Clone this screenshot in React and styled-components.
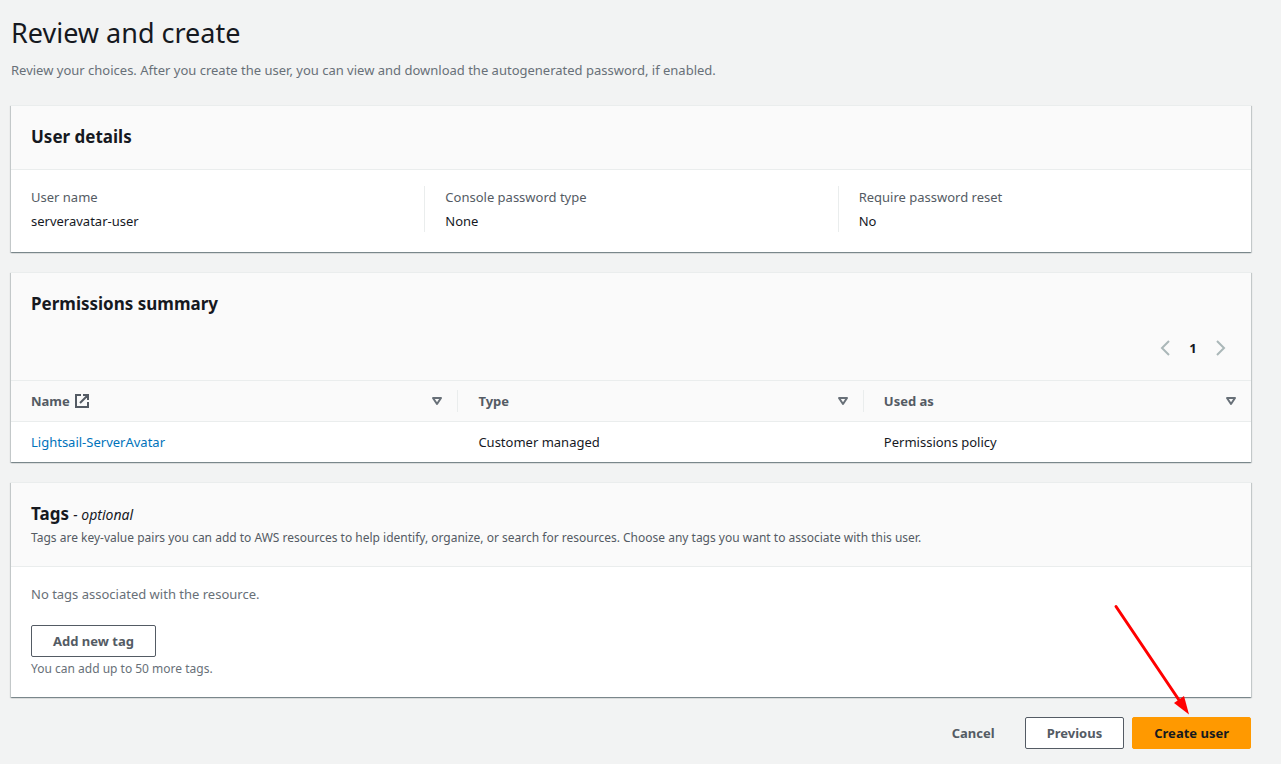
import React from 'react';
import styled, { createGlobalStyle } from 'styled-components';

const GlobalStyle = createGlobalStyle`
  * {
    box-sizing: border-box;
  }

  body {
    margin: 0;
    background: #f2f3f3;
    color: #16191f;
    font-family: "Noto Sans", "Open Sans", sans-serif;
    font-size: 13px;
    line-height: 22px;
  }
`;

const Page = styled.main`
  padding: 15px 30px 15px 11px;
`;

const PageHeader = styled.header`
  margin-bottom: 24px;

  h1 {
    margin: 0 0 8px;
    font-size: 27px;
    font-weight: 400;
    line-height: 36px;
  }

  p {
    margin: 0;
    color: #687078;
  }
`;

const Panel = styled.section`
  margin-bottom: 20px;
  background: #fff;
  border-top: 1px solid #eaeded;
  box-shadow: 0 1px 1px 0 rgba(0, 28, 36, 0.3),
    1px 1px 1px 0 rgba(0, 28, 36, 0.15),
    -1px 1px 1px 0 rgba(0, 28, 36, 0.15);
`;

const PanelHeader = styled.div`
  padding: 19px 20px 20px;
  background: #fafafa;
  border-bottom: 1px solid #eaeded;

  h2 {
    margin: 0;
    font-size: 17px;
    font-weight: 700;
    line-height: 24px;
  }

  p {
    margin: 3px 0 0;
    color: #545b64;
    font-size: 12px;
    line-height: 16px;
  }
`;

const Optional = styled.i`
  font-size: 14px;
  font-weight: 400;
`;

const Details = styled.dl`
  display: grid;
  grid-template-columns: repeat(3, 1fr);
  margin: 0;
  padding: 16px 0 20px;
`;

const Detail = styled.div`
  padding: 0 20px;

  & + & {
    border-left: 1px solid #eaeded;
  }

  dt {
    margin-bottom: 2px;
    color: #545b64;
  }

  dd {
    margin: 0;
  }
`;

const Pagination = styled.nav`
  display: flex;
  justify-content: flex-end;
  align-items: center;
  gap: 8px;
  margin-top: 20px;
`;

const PageButton = styled.button`
  display: flex;
  align-items: center;
  justify-content: center;
  width: 20px;
  height: 24px;
  padding: 0;
  border: 0;
  background: none;
  color: ${(props) => (props.disabled ? '#aab7b8' : '#16191f')};
  font: inherit;
  font-weight: 700;
`;

const Table = styled.table`
  width: 100%;
  table-layout: fixed;
  border-collapse: collapse;

  th,
  td {
    padding: 9px 20px;
    text-align: left;
  }

  th {
    padding: 9px 0;
    background: #fafafa;
    border-bottom: 1px solid #eaeded;
    color: #545b64;
    font-weight: 700;
  }

  td + td {
    padding-left: 21px;
  }

  a {
    color: #0073bb;
    text-decoration: none;
  }
`;

const Column = styled.col`
  width: ${(props) => props.$width};
`;

const HeadCell = styled.div`
  display: flex;
  align-items: center;
  justify-content: space-between;
  padding: 0 14px 0 20px;

  th + th & {
    border-left: 1px solid #eaeded;
  }
`;

const HeadLabel = styled.span`
  display: flex;
  align-items: center;
  gap: 4px;
`;

const SortButton = styled.button`
  display: flex;
  padding: 0;
  border: 0;
  background: none;
  color: #687078;
`;

const TagsBody = styled.div`
  padding: 16px 20px 20px;

  p {
    margin: 0 0 20px;
    color: #687078;
  }

  small {
    display: block;
    margin-top: 4px;
    color: #687078;
    font-size: 12px;
    line-height: 16px;
  }
`;

const Button = styled.button`
  height: 32px;
  padding: 0 21px;
  border: 1px solid #545b64;
  border-radius: 2px;
  background: #fff;
  color: #545b64;
  font: inherit;
  font-weight: 700;
`;

const LinkButton = styled(Button)`
  border-color: transparent;
  background: none;
`;

const PrimaryButton = styled(Button)`
  border-color: #ff9900;
  background: #ff9900;
  color: #16191f;
`;

const Actions = styled.footer`
  position: relative;
  display: flex;
  justify-content: flex-end;
  gap: 8px;
`;

const Pointer = styled.svg`
  position: absolute;
  right: 59px;
  bottom: 100%;
  pointer-events: none;
`;

const details = [
  { label: 'User name', value: 'serveravatar-user' },
  { label: 'Console password type', value: 'None' },
  { label: 'Require password reset', value: 'No' },
];

function Chevron({ d }) {
  return (
    <svg width="16" height="16" viewBox="0 0 16 16" fill="none" stroke="currentColor" strokeWidth="2">
      <path d={d} />
    </svg>
  );
}

function SortHead({ label, children }) {
  return (
    <th scope="col">
      <HeadCell>
        <HeadLabel>{label}{children}</HeadLabel>
        <SortButton aria-label={`Sort by ${label}`}>
          <svg width="12" height="12" viewBox="0 0 12 12" fill="none" stroke="currentColor" strokeWidth="2" strokeLinejoin="round">
            <path d="M2 3h8L6 9z" />
          </svg>
        </SortButton>
      </HeadCell>
    </th>
  );
}

export default function App() {
  return (
    <Page>
      <GlobalStyle />
      <PageHeader>
        <h1>Review and create</h1>
        <p>Review your choices. After you create the user, you can view and download the autogenerated password, if enabled.</p>
      </PageHeader>

      <Panel>
        <PanelHeader>
          <h2>User details</h2>
        </PanelHeader>
        <Details>
          {details.map(({ label, value }) => (
            <Detail key={label}>
              <dt>{label}</dt>
              <dd>{value}</dd>
            </Detail>
          ))}
        </Details>
      </Panel>

      <Panel>
        <PanelHeader>
          <h2>Permissions summary</h2>
          <Pagination aria-label="Pagination">
            <PageButton disabled aria-label="Previous page"><Chevron d="M12 1 5 8l7 7" /></PageButton>
            <PageButton>1</PageButton>
            <PageButton disabled aria-label="Next page"><Chevron d="m4 1 7 7-7 7" /></PageButton>
          </Pagination>
        </PanelHeader>
        <Table>
          <colgroup>
            <Column $width="36%" />
            <Column $width="32.7%" />
            <Column />
          </colgroup>
          <thead>
            <tr>
              <SortHead label="Name">
                <svg width="16" height="16" viewBox="0 0 16 16" fill="none" stroke="currentColor" strokeWidth="2">
                  <path d="M7 2H2v12h12V9M9 2h5v5M14 2 6 10" />
                </svg>
              </SortHead>
              <SortHead label="Type" />
              <SortHead label="Used as" />
            </tr>
          </thead>
          <tbody>
            <tr>
              <td><a href="#policy">Lightsail-ServerAvatar</a></td>
              <td>Customer managed</td>
              <td>Permissions policy</td>
            </tr>
          </tbody>
        </Table>
      </Panel>

      <Panel>
        <PanelHeader>
          <h2>Tags <Optional>- optional</Optional></h2>
          <p>Tags are key-value pairs you can add to AWS resources to help identify, organize, or search for resources. Choose any tags you want to associate with this user.</p>
        </PanelHeader>
        <TagsBody>
          <p>No tags associated with the resource.</p>
          <Button>Add new tag</Button>
          <small>You can add up to 50 more tags.</small>
        </TagsBody>
      </Panel>

      <Actions>
        <LinkButton>Cancel</LinkButton>
        <Button>Previous</Button>
        <PrimaryButton>Create user</PrimaryButton>
        <Pointer width="80" height="115" viewBox="0 0 80 115" aria-hidden="true">
          <path d="M4 4.500 69 101" stroke="#ff0000" strokeWidth="3" strokeLinecap="round" />
          <path d="M77 112.500 62 101 72 94z" fill="#ff0000" />
        </Pointer>
      </Actions>
    </Page>
  );
}
